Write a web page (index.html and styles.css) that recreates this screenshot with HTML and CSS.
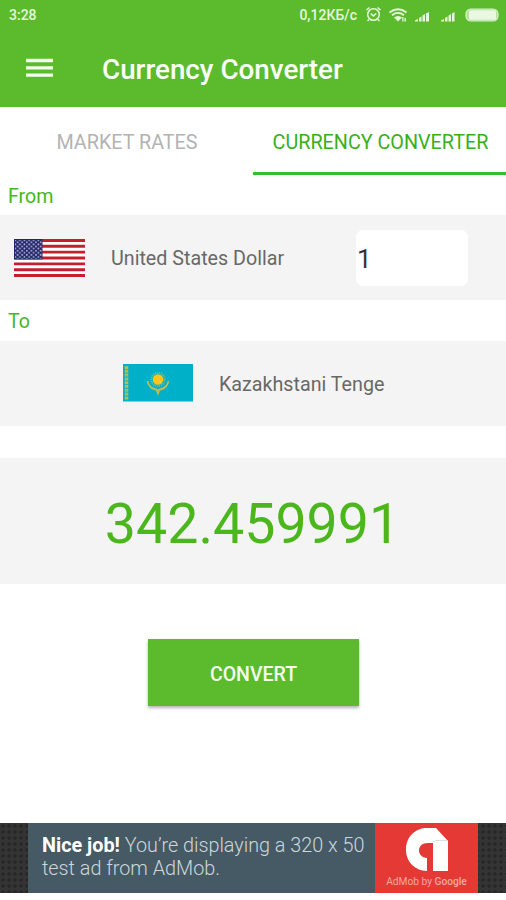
FILE: index.html
```html
<!DOCTYPE html>
<html lang="en">
<head>
<meta charset="utf-8">
<title>Currency Converter</title>
<link rel="stylesheet" href="styles.css">
</head>
<body>
<header class="header">
  <div class="status">
    <span class="clock">3:28</span>
    <span class="speed">0,12КБ/с</span>
    <svg class="status-icons" width="135" height="18" viewBox="0 0 135 18">
      <g fill="none" stroke="#e5f7dc" stroke-width="1.5">
        <circle cx="9.500" cy="8.500" r="5.800"/>
        <path d="M6.700 7.500l2.600 2.400 3-2.400M2.500 4l3-2.500M16.500 4l-3-2.500M5 13.500l-1.500 1.600M14 13.500l1.500 1.600"/>
        <path d="M25.500 6.500q8.500-6.500 17 0M28 9.200q6-4.500 12 0" stroke-width="1.800"/>
      </g>
      <g fill="#e5f7dc">
        <path d="M30 11.500q4-3 8 0l-4 4zM38.200 11h1.300v4.500h-1.300zM40.500 12H42v3.500h-1.500z"/>
        <path d="M51 15.500v-1l3-1.500v2.500zM55 15.500v-3.500l2.500-1.500v5zM58.500 15.500V9.500L61 8v7.500zM62 15.500v-8L65 6v9.500z"/>
        <path d="M77 15.500v-1l3-1.500v2.500zM81 15.500v-3.500l2.500-1.500v5zM84.500 15.500V9.500L87 8v7.500zM88 15.500v-8L90.500 6v9.500z"/>
      </g>
      <rect x="102" y="3" width="32" height="12" rx="4.800" fill="#b5e29b" stroke="#d6f0c8" stroke-width="1.200"/>
      <rect x="105" y="4.300" width="27" height="9.400" rx="1.500" fill="#eaf8e2"/>
    </svg>
  </div>
  <div class="toolbar">
    <svg class="menu" width="27" height="20" viewBox="0 0 27 20"><path d="M0 2.500h27M0 9.800h27M0 17.200h27" stroke="#f4fdee" stroke-width="3.300"/></svg>
    <h1 class="title">Currency Converter</h1>
  </div>
</header>
<nav class="tabs">
  <div class="tab"><span class="tab-rates">MARKET RATES</span></div>
  <div class="tab active"><span class="tab-conv">CURRENCY CONVERTER</span></div>
</nav>
<main>
  <div class="label label-from">From</div>
  <section class="row from">
    <svg class="flag" width="71" height="38" viewBox="0 0 71 38">
      <defs><pattern id="stars" width="4.600" height="4.200" patternUnits="userSpaceOnUse"><circle cx="1.300" cy="1.200" r=".9" fill="#b9bbdc"/><circle cx="3.600" cy="3.300" r=".9" fill="#b9bbdc"/></pattern></defs>
      <path fill="#fff" d="M0 0h71v38H0z"/>
      <path d="M0 1.460h71M0 7.310h71M0 13.150h71M0 19h71M0 24.850h71M0 30.690h71M0 36.540h71" stroke="#c3202f" stroke-width="2.920"/>
      <path fill="#24266b" d="M0 0h28.500v20.460H0z"/><path fill="url(#stars)" d="M1 1h27v18.800H1z"/>
    </svg>
    <span class="name usd">United States Dollar</span>
    <div class="amount">1</div>
  </section>
  <div class="label label-to">To</div>
  <section class="row to">
    <svg class="flag" width="71" height="38" viewBox="0 0 71 38">
      <path fill="#00b0c8" d="M1 0h70v37.500H1z"/>
      <path d="M4.500 2v34" stroke="#b8bd4b" stroke-width="3.600" stroke-dasharray="3 .8"/>
      <path d="M4.500 2v34" stroke="#4db69b" stroke-width="1" stroke-dasharray="1 2"/>
      <circle cx="36" cy="15.500" r="6.600" fill="none" stroke="#78b783" stroke-width="2" stroke-dasharray="1.200 .8"/>
      <circle cx="36" cy="15.500" r="5.200" fill="#fcc51c"/>
      <path d="M25.500 17q1.500 7 8 8l2.500 1.500 2.500-1.500q6.500-1 8-8M27 21q3.500 5 7.500 4.500l1.500 4 1.500-4q4 .5 7.500-4.500" fill="none" stroke="#b7bd58" stroke-width="1.700"/>
    </svg>
    <span class="name kzt">Kazakhstani Tenge</span>
  </section>
  <section class="result"><span>342.459991</span></section>
  <button class="convert"><span>CONVERT</span></button>
</main>
<footer class="ad">
  <div class="ad-copy">
    <div class="line1"><b>Nice job!</b> You’re displaying a 320 x 50</div>
    <div class="line2">test ad from AdMob.</div>
  </div>
  <div class="ad-logo">
    <svg width="44" height="45" viewBox="0 0 44 45">
      <path fill="#fff" d="M22 44C10 43.500 1 35 1 22.500 1 9 11 1 22 1h9l12 13v30H28V16h-5c-6 0-9 3-9 7.500 0 4 3 7 8 7.500z"/>
      <path fill="#dedede" d="M28 16v-2h15l-.5-1H31z"/>
    </svg>
    <div class="brand">AdMob by <b>Google</b></div>
  </div>
</footer>
</body>
</html>
```
FILE: styles.css
```css
* { box-sizing: border-box; }
body { margin: 0; width: 506px; height: 900px; display: flex; flex-direction: column; overflow: hidden; background: #fff; font-family: Roboto, sans-serif; }
span, .title, .line1, .line2, .brand { white-space: nowrap; }
.header { height: 107px; background: #5cbb2d; flex: none; }
.status { height: 30px; display: flex; align-items: center; padding: 0 7px 0 9px; font-size: 14px; font-weight: 500; color: #e5f7dc; }
.speed { margin-left: auto; margin-right: 7px; }
.toolbar { height: 77px; display: flex; align-items: center; padding: 0 0 1px 26px; }
.menu { margin-right: 49px; }
.title { margin: 4px 0 0; font-size: 27.800px; line-height: 34px; font-weight: 500; color: #fafff7; }
.tabs { height: 68px; display: flex; flex: none; font-size: 19.750px; color: #b3b3b3; }
.tab { width: 50%; display: flex; align-items: center; justify-content: center; padding-top: 6px; border-bottom: 3px solid transparent; }
.tab-rates { padding-left: 1px; }
.tab-conv { padding-left: 2px; }
.active { color: #36b01a; border-color: #38bd30; }
main { display: flex; flex-direction: column; }
.label { padding-left: 8px; font-size: 19.600px; color: #43b820; }
.label-from { height: 40px; line-height: 44px; }
.label-to { height: 41px; line-height: 44px; }
.row { height: 85px; display: flex; align-items: center; background: #f4f4f4; }
.from { padding-left: 14px; }
.to { padding-left: 122px; }
.flag { margin-right: 26px; flex: none; }
.to .flag { margin-top: -1px; }
.name { font-size: 19.700px; color: #686868; padding-top: 2px; }
.amount { width: 112px; height: 56px; line-height: 59px; padding-left: 1px; margin-left: auto; margin-right: 38px; background: #fff; border-radius: 7px; font-size: 26px; color: #333; }
.result { height: 126px; margin-top: 32px; background: #f4f4f4; display: flex; align-items: center; justify-content: center; font-size: 55.500px; color: #4bb71d; padding: 6px 1px 0 0; }
.convert { align-self: center; width: 211px; height: 67px; margin-top: 55px; border: 0; padding: 3px 0 0 1px; background: #5cbb2d; box-shadow: 0 2px 3px rgba(0,0,0,.3); font: 500 19.500px Roboto, sans-serif; color: #f6ffef; }
.ad { height: 70px; margin: auto 0 7px; flex: none; display: flex; justify-content: center; background: #343434 radial-gradient(circle, #282828 1.500px, transparent 2px) 0 0 / 6px 6px; }
.ad-copy { width: 347px; padding: 11px 0 0 14px; background: #455a64; color: #ced7dc; font-size: 19.800px; line-height: 23px; font-weight: 300; }
.ad-copy b { color: #fff; font-weight: 700; }
.ad-logo { width: 103px; background: #e53935; display: flex; flex-direction: column; align-items: center; padding-top: 4px; }
.brand { font-size: 10.200px; line-height: 14px; margin-top: 3px; color: #f5a6a1; }
.brand b { font-weight: 500; }
```
